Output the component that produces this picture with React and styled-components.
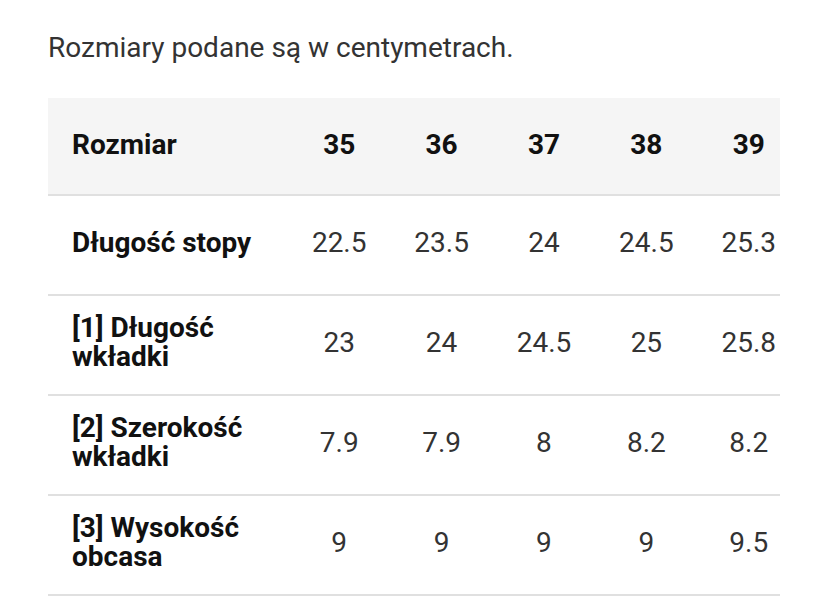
import React from "react";
import styled, { createGlobalStyle } from "styled-components";

const GlobalStyle = createGlobalStyle`
  body {
    margin: 0;
    background: #fff;
    font-family: Roboto, "Liberation Sans", sans-serif;
  }
`;

const Page = styled.div`
  padding: 30px 48px 0 48px;
`;

const Note = styled.p`
  margin: 0 0 32px 0;
  font-size: 28px;
  line-height: 36px;
  color: #333;
`;

const TableWrap = styled.div`
  width: 732px;
  overflow: hidden;
`;

const Table = styled.table`
  border-collapse: collapse;
  table-layout: fixed;
  width: 752px;
  font-size: 28px;
`;

const HeadRow = styled.tr`
  background: #f5f5f5;
  border-bottom: 2px solid #e0e0e0;
`;

const Row = styled.tr`
  border-bottom: 2px solid #e0e0e0;
`;

const Cell = styled.td`
  box-sizing: border-box;
  height: ${(p) => (p.$head ? "97px" : "100px")};
  padding: 0 ${(p) => (p.$label ? "24px" : "0")} ${(p) => (p.$head ? "4px" : "6px")};
  text-align: ${(p) => (p.$label ? "left" : "center")};
  vertical-align: middle;
  line-height: 29px;
  font-weight: ${(p) => (p.$bold ? 700 : 400)};
  color: ${(p) => (p.$bold ? "#111" : "#333")};
`;

const sizes = ["35", "36", "37", "38", "39"];

const rows = [
  { label: "Długość stopy", values: ["22.5", "23.5", "24", "24.5", "25.3"] },
  { label: "[1] Długość wkładki", values: ["23", "24", "24.5", "25", "25.8"] },
  { label: "[2] Szerokość wkładki", values: ["7.9", "7.9", "8", "8.2", "8.2"] },
  { label: "[3] Wysokość obcasa", values: ["9", "9", "9", "9", "9.5"] },
];

const App = () => {
  return (
    <Page>
      <GlobalStyle />
      <Note>Rozmiary podane są w centymetrach.</Note>
      <TableWrap>
        <Table>
          <colgroup>
            <col style={{ width: 240 }} />
            {sizes.map((s) => (
              <col key={s} style={{ width: 102.4 }} />
            ))}
          </colgroup>
          <thead>
            <HeadRow>
              <Cell as="th" $head $label $bold>
                Rozmiar
              </Cell>
              {sizes.map((s) => (
                <Cell as="th" key={s} $head $bold>
                  {s}
                </Cell>
              ))}
            </HeadRow>
          </thead>
          <tbody>
            {rows.map((r) => (
              <Row key={r.label}>
                <Cell $label $bold>
                  {r.label}
                </Cell>
                {r.values.map((v, i) => (
                  <Cell key={i}>{v}</Cell>
                ))}
              </Row>
            ))}
          </tbody>
        </Table>
      </TableWrap>
    </Page>
  );
};

export default App;
